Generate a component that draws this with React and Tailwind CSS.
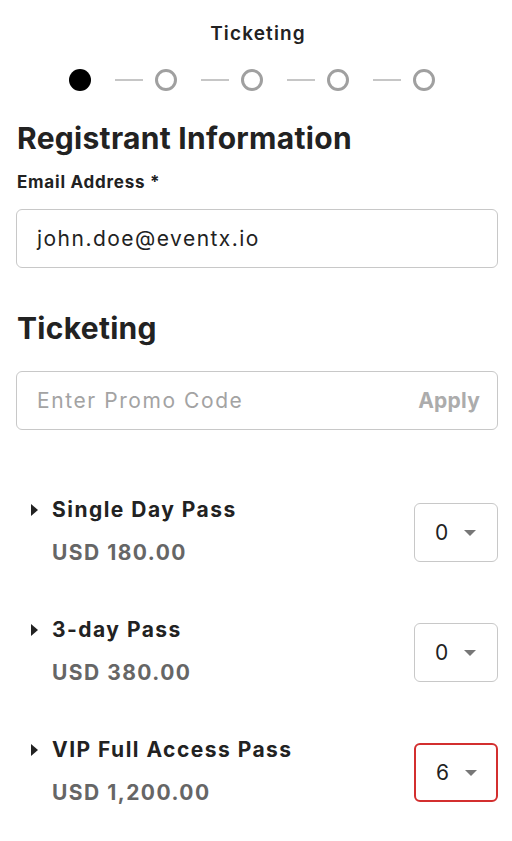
import React from 'react';

const tickets = [
  { name: 'Single Day Pass', price: 'USD 180.00', qty: '0', error: false },
  { name: '3-day Pass', price: 'USD 380.00', qty: '0', error: false },
  { name: 'VIP Full Access Pass', price: 'USD 1,200.00', qty: '6', error: true },
];

const Step = ({ active }) => (
  <div
    className={`w-[22px] h-[22px] shrink-0 rounded-full ${active ? 'bg-black' : 'border-[3px] border-[#a0a0a0] bg-white'}`}
  />
);

const App = () => {
  return (
    <div
      className="w-[512px] min-h-[841px] bg-white pl-4 pr-[14px] text-[#222]"
      style={{ fontFamily: 'Inter, "Open Sans", sans-serif' }}
    >
      {/* Header */}
      <div className="pt-[22px] text-center text-[19px] font-semibold leading-6 tracking-[0.06em] pl-[2px]">Ticketing</div>

      {/* Stepper */}
      <div className="mt-[23px] flex items-center pl-[53px]">
        {[0, 1, 2, 3, 4].map((i) => (
          <React.Fragment key={i}>
            {i > 0 && <div className="ml-[24px] mr-[12px] h-[2px] w-[28px] bg-[#c6c6c6]" />}
            <Step active={i === 0} />
          </React.Fragment>
        ))}
      </div>

      {/* Registrant */}
      <h2 className="mt-[29px] text-[30px] font-bold leading-9 tracking-[0.01em] px-px">Registrant Information</h2>
      <label className="mt-[16px] block text-[17px] font-bold leading-5 tracking-[0.045em] px-px">Email Address *</label>
      <div className="mt-[17px] flex h-[59px] items-center rounded-[6px] border border-[#c8c8c8] px-5 text-[21px] tracking-[0.07em]">
        john.doe@eventx.io
      </div>

      {/* Ticketing */}
      <h2 className="mt-[42px] text-[30px] font-bold leading-9 tracking-[0.01em] px-px">Ticketing</h2>
      <div className="mt-[25px] flex h-[59px] items-center justify-between rounded-[6px] border border-[#c8c8c8] pl-5 pr-[17px] text-[21px]">
        <span className="tracking-[0.075em] text-[#a3a3a3]">Enter Promo Code</span>
        <span className="font-bold tracking-[0.01em] text-[#acacac]">Apply</span>
      </div>

      {/* Ticket list */}
      <div className="mt-[66px] flex flex-col gap-[49px]">
        {tickets.map((t) => (
          <div key={t.name} className="flex items-start justify-between">
            <div className="flex flex-col">
              <div className="flex h-[28px] items-center text-[21px] font-bold tracking-[0.07em]">
                <svg width="7" height="12" viewBox="0 0 7 12" className="ml-[15px] mr-[14px]">
                  <path d="M0 0 L7 6 L0 12 Z" fill="#222" />
                </svg>
                {t.name}
              </div>
              <div className="ml-[36px] mt-[15px] text-[21px] font-bold leading-7 tracking-[0.07em] text-[#666]">{t.price}</div>
            </div>
            <div
              className={`mt-[7px] flex h-[59px] w-[84px] items-center rounded-[6px] text-[21px] ${t.error ? 'border-2 border-[#d32f2f] pl-[20px]' : 'border border-[#c8c8c8] pl-[20px]'}`}
            >
              <span className="w-[29px]">{t.qty}</span>
              <svg width="12" height="6" viewBox="0 0 12 6">
                <path d="M0 0 L12 0 L6 6 Z" fill="#777" />
              </svg>
            </div>
          </div>
        ))}
      </div>
    </div>
  );
};

export default App;
